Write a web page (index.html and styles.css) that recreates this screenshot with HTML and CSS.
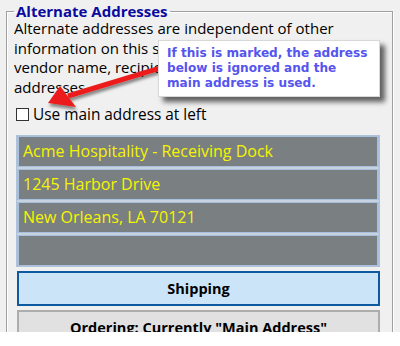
FILE: index.html
```html
<!DOCTYPE html>
<html>
<head>
<meta charset="utf-8">
<link rel="stylesheet" href="styles.css">
</head>
<body>
<div class="panel">
  <fieldset class="group">
    <legend class="group-title">Alternate Addresses</legend>
    <p class="intro">Alternate addresses are independent of other<br>information on this screen, such as<br>vendor name, recipient, or other<br>addresses</p>
    <label class="check-row"><span class="box"></span><span>Use main address at left</span></label>
    <div class="fields">
      <div class="field">Acme Hospitality - Receiving Dock</div>
      <div class="field">1245 Harbor Drive</div>
      <div class="field">New Orleans, LA 70121</div>
      <div class="field"></div>
    </div>
    <div class="btn btn-ship">Shipping</div>
    <div class="btn btn-order">Ordering: Currently "Main Address"</div>
  </fieldset>
  <svg class="arrow" width="130" height="60" viewBox="0 0 130 60">
    <defs>
      <filter id="sh" x="-20%" y="-20%" width="150%" height="180%">
        <feDropShadow dx="1" dy="3" stdDeviation="1.5" flood-color="#000" flood-opacity="0.45"/>
      </filter>
    </defs>
    <g filter="url(#sh)" fill="#ec1f1a">
      <path d="M27.3 33.6 L124 4.2 L125.4 9 L28.7 38.4 Z"/>
      <path d="M8 43 L20 26 L36 47 Z"/>
    </g>
  </svg>
  <div class="tip">If this is marked, the address below is ignored and the main address is used.</div>
</div>
</body>
</html>
```
FILE: styles.css
```css
html, body {
  margin: 0;
  padding: 0;
  background: #ffffff;
}
.panel {
  position: relative;
  width: 400px;
  height: 332px;
  overflow: hidden;
  background: #f0f0f0;
  font-family: "Open Sans", "Noto Sans", sans-serif;
}
.group {
  margin: 4px 7px 0 6px;
  padding: 0 12px 0 7px;
  border: 1px solid #a0a0a0;
  box-shadow: 1px 1px 0 #ffffff, inset 1px 1px 0 #ffffff;
  height: 400px;
}
.group-title {
  margin-left: 0;
  padding: 0 2px;
  font-size: 15px;
  font-weight: 700;
  color: #0a0aa0;
  line-height: 14px;
}
.intro {
  margin: 0;
  padding-top: 1px;
  font-size: 15px;
  line-height: 19.5px;
  color: #000;
  white-space: nowrap;
  height: 80px;
  overflow: hidden;
}
.check-row {
  display: flex;
  align-items: center;
  gap: 4px;
  margin: 5px 0 0 2px;
  height: 20px;
  font-size: 15.4px;
  color: #000;
}
.box {
  width: 11px;
  height: 11px;
  border: 1px solid #333;
  background: #fff;
}
.fields {
  margin: 11px 0 0 2px;
  display: flex;
  flex-direction: column;
  gap: 2px;
  background: #c6d2e0;
  border: 1px solid #b0c2d8;
}
.field {
  height: 29px;
  border: 1px solid #a8bfdd;
  border-width: 1px 2px;
  background: #7a7f82;
  color: #f5f500;
  font-size: 16px;
  line-height: 29px;
  padding-left: 4px;
}
.btn {
  display: flex;
  align-items: center;
  justify-content: center;
  font-size: 14.5px;
  font-weight: 700;
  color: #000;
  margin-left: 3px;
}
.btn-ship {
  margin-top: 4px;
  height: 31px;
  background: #cce4f7;
  border: 2px solid #0d5aa0;
}
.btn-order {
  margin-top: 4px;
  height: 31px;
  background: #e1e1e1;
  border: 2px solid #adadad;
}
.arrow {
  position: absolute;
  left: 40px;
  top: 60px;
}
.tip {
  position: absolute;
  left: 158px;
  top: 40px;
  width: 204px;
  height: 45px;
  padding: 5px 8px 5px 8px;
  background: #ffffff;
  border: 1px solid #d8d8d8;
  box-shadow: 5px 5px 5px rgba(0,0,0,0.6);
  font-family: "DejaVu Sans", sans-serif;
  font-weight: 700;
  font-size: 12.1px;
  line-height: 15px;
  color: #5555ee;
}
```
